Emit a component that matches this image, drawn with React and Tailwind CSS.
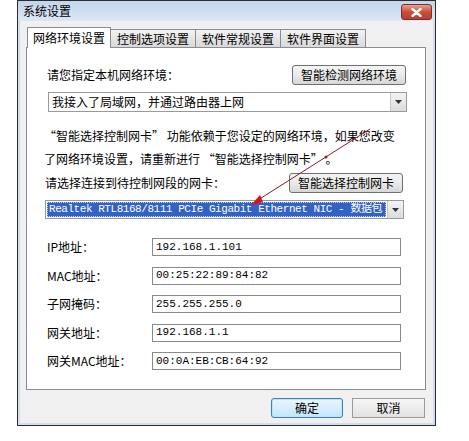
import React from 'react'

const ui = { fontFamily: '"Noto Sans CJK SC", "Noto Sans", sans-serif' }
const mono = { fontFamily: '"Liberation Mono", "Noto Sans CJK SC", monospace' }

function Tab({ label, active }) {
  return active ? (
    <div className="relative z-10 -mb-px h-[21px] border border-b-0 border-[#898c95] bg-white px-[5px] text-[12px] leading-[19px] text-black">
      {label}
    </div>
  ) : (
    <div className="mt-[2px] h-[18px] border border-b-0 border-l-0 border-[#898c95] bg-gradient-to-b from-[#f2f2f2] to-[#d9d9d9] px-[6px] text-[12px] leading-[17px] text-black">
      {label}
    </div>
  )
}

function GrayButton({ children, className }) {
  return (
    <div
      className={`flex h-[20px] items-center justify-center rounded-[3px] border border-[#707070] bg-gradient-to-b from-[#f4f4f4] via-[#ebebeb] to-[#d6d6d6] text-[12px] text-black ${className}`}
    >
      {children}
    </div>
  )
}

function DropArrow() {
  return (
    <div className="flex h-full w-[16px] shrink-0 items-center justify-center border-l border-[#c8c8c8] bg-gradient-to-b from-[#f3f3f3] to-[#dcdcdc]">
      <svg width="7" height="4" viewBox="0 0 7 4">
        <path d="M0 0h7L3.5 4z" fill="#333" />
      </svg>
    </div>
  )
}

function Field({ label, value }) {
  return (
    <div className="flex h-[18px] items-center">
      <div className="w-[125px] shrink-0 whitespace-nowrap pl-[20px] text-[12px] text-black">{label}</div>
      <div
        className="flex h-[18px] w-[249px] items-center border border-[#8a8a8a] bg-white pl-[3px] text-[11px] text-black"
        style={mono}
      >
        {value}
      </div>
    </div>
  )
}

export default function App() {
  return (
    <div className="relative h-[441px] w-[469px] overflow-hidden bg-white" style={ui}>
      <div className="ml-[17px] flex h-[426px] w-[419px] flex-col border border-[#2c2c2c] bg-[#cfdff1]">
        {/* title bar */}
        <div className="flex h-[20px] items-center justify-between bg-gradient-to-b from-[#c2d5ec] to-[#dbe7f5] pl-[5px] pr-[3px]">
          <span className="text-[12px] text-black">系统设置</span>
          <div className="mt-[2px] flex h-[16px] w-[31px] items-center justify-center rounded-[3px] border border-[#7a3030] bg-gradient-to-b from-[#e8a08e] via-[#c7503c] to-[#b8402c]">
            <svg width="11" height="9" viewBox="0 0 11 9">
              <path d="M1.5 1l8 7M9.5 1l-8 7" stroke="#fff" strokeWidth="2.4" strokeLinecap="round" />
            </svg>
          </div>
        </div>
        {/* client */}
        <div className="mx-[2px] mb-[2px] flex flex-1 flex-col bg-[#f0f0f0] pl-[6px] pr-[7px] pt-[6px]">
          <div className="flex pl-[1px]">
            <Tab label="网络环境设置" active />
            <Tab label="控制选项设置" />
            <Tab label="软件常规设置" />
            <Tab label="软件界面设置" />
          </div>
          <div className="flex h-[343px] flex-col border border-[#898c95] bg-white pt-[17px] text-[12px] text-black">
            <div className="flex items-center justify-between pl-[20px] pr-[19px]">
              <span>请您指定本机网络环境：</span>
              <GrayButton className="w-[114px]">智能检测网络环境</GrayButton>
            </div>
            <div className="ml-[21px] mt-[7px] flex h-[20px] w-[359px] items-center border border-[#9a9a9a] bg-white">
              <span className="flex-1 pl-[3px]">我接入了局域网，并通过路由器上网</span>
              <DropArrow />
            </div>
            <div className="mt-[12px] pl-[17px] leading-[23px]">
              <div>“智能选择控制网卡” 功能依赖于您设定的网络环境，如果您改变</div>
              <div>了网络环境设置，请重新进行 “智能选择控制网卡” 。</div>
            </div>
            <div className="mt-[3px] flex items-center justify-between pl-[18px] pr-[22px]">
              <span>请选择连接到待控制网段的网卡：</span>
              <GrayButton className="w-[114px]">智能选择控制网卡</GrayButton>
            </div>
            <div className="ml-[18px] mt-[7px] flex h-[19px] w-[359px] items-center border border-[#9a9a9a] bg-white">
              <div className="flex h-full min-w-0 flex-1 items-center p-[1px]">
                <div
                  className="flex h-full w-full items-center overflow-hidden whitespace-nowrap border border-dotted border-[#c9d4ee] bg-[#3162c4] pl-[1px] text-[11px] tracking-[-0.45px] text-white"
                  style={mono}
                >
                  Realtek RTL8168/8111 PCIe Gigabit Ethernet NIC - 数据包
                </div>
              </div>
              <DropArrow />
            </div>
            <div className="mt-[19px] flex flex-col gap-[10.5px]">
              <Field label="IP地址：" value="192.168.1.101" />
              <Field label="MAC地址：" value="00:25:22:89:84:82" />
              <Field label="子网掩码：" value="255.255.255.0" />
              <Field label="网关地址：" value="192.168.1.1" />
              <Field label="网关MAC地址：" value="00:0A:EB:CB:64:92" />
            </div>
          </div>
          <div className="mt-[8px] flex justify-end gap-[9px] pr-[1px]">
            <div className="flex h-[20px] w-[72px] items-center justify-center rounded-[3px] border border-[#3c7fb1] bg-gradient-to-b from-[#eaf6fd] via-[#d9eefb] to-[#bee6fd] text-[12px] text-black shadow-[inset_0_0_0_1px_#bde4f8]">
              确定
            </div>
            <div className="flex h-[20px] w-[73px] items-center justify-center border border-[#9a9a9a] bg-gradient-to-b from-[#f6f6f6] to-[#e2e2e2] text-[12px] text-black">
              取消
            </div>
          </div>
        </div>
      </div>
      {/* annotation arrow */}
      <svg className="pointer-events-none absolute left-0 top-0" width="469" height="441">
        <line x1="370" y1="129" x2="258" y2="200" stroke="#8a1c2a" strokeWidth="1" />
        <circle cx="326" cy="157" r="1.5" fill="#8a1c2a" />
        <path d="M251 205l9-10 3 7z" fill="#e01010" />
      </svg>
    </div>
  )
}
